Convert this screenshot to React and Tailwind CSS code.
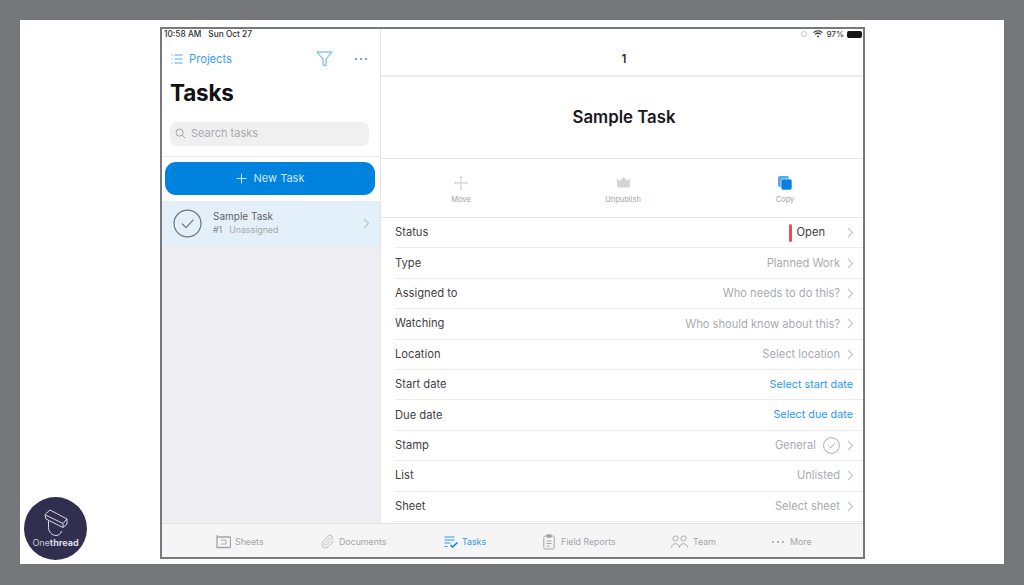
import React from "react";
import { Paperclip } from "lucide-react";

const F = "font-['Inter','Liberation_Sans',sans-serif]";

function Chevron({ className = "" }) {
  return (
    <svg width="7" height="11" viewBox="0 0 7 11" fill="none" className={className}>
      <path d="M1 1l4.500 4.500L1 10" stroke="#c4c5c9" strokeWidth="1.1" />
    </svg>
  );
}

function CheckCircle({ size, stroke = "#77777a", w = 1.2 }) {
  return (
    <svg width={size} height={size} viewBox="0 0 28 28" fill="none">
      <circle cx="14" cy="14" r="13" stroke={stroke} strokeWidth={w} />
      <path d="M9 14.500l3.600 3.500L19.500 10.500" stroke={stroke} strokeWidth={w} strokeLinecap="round" strokeLinejoin="round" />
    </svg>
  );
}

function Row({ label, value, tone = "gray", chevron = true, bar = false, stamp = false }) {
  const color =
    tone === "blue"
      ? "text-[#2b9af3] text-[10.8px]"
      : tone === "dark"
      ? "text-[#3c3c40] text-[11.15px]"
      : "text-[#a9abb0] text-[11.15px]";
  return (
    <div className="h-[30.4px] flex items-center border-b border-[#ececee] text-[11.2px]">
      <span className="text-[#3f3f43]">{label}</span>
      <div className="ml-auto flex items-center">
        {bar && <span className="w-[3px] h-[18px] bg-[#ee4c55] rounded-sm mr-[5px]" />}
        <span className={color}>{value}</span>
        {stamp && (
          <span className="ml-[7px] flex">
            <CheckCircle size={17} stroke="#8a8b8f" />
          </span>
        )}
        {chevron ? (
          <span className={`${bar ? "ml-[22px]" : stamp ? "ml-[7px]" : "ml-[7px]"} mr-[9px] flex`}>
            <Chevron />
          </span>
        ) : (
          <span className="mr-[10px]" />
        )}
      </div>
    </div>
  );
}

function Action({ icon, label }) {
  return (
    <div className="w-[162px] shrink-0 flex flex-col items-center justify-start pt-[16px]">
      <div className="h-[15px] flex items-center">{icon}</div>
      <span className="mt-[3px] text-[7.5px] text-[#a2a3a8] leading-[14px]">{label}</span>
    </div>
  );
}

function Tab({ icon, label, active, width, gap = "gap-[4px]" }) {
  return (
    <div className={`flex items-center ${gap} ${width} shrink-0`}>
      {icon}
      <span className={`text-[8.8px] ${active ? "text-[#2b9af3]" : "text-[#a4a5a9]"}`}>{label}</span>
    </div>
  );
}

export default function App() {
  return (
    <div className={`w-[1024px] h-[585px] bg-[#76777b] px-5 pt-5 ${F}`}>
      <div className="relative w-[984px] h-[544px] bg-white pl-[140px] pt-[7px]">
        <div className="w-[705px] h-[532px] border-2 border-[#77797d] flex flex-col bg-white overflow-hidden">
          <div className="flex flex-1 min-h-0">
            {/* sidebar */}
            <div className="w-[219px] shrink-0 bg-[#efeff3] border-r border-[#e4e4e7] flex flex-col">
              <div className="bg-white h-[127px] flex flex-col">
                <div className="h-[10px] pl-[2px] flex items-center text-[8.3px] text-[#303033] font-medium gap-[7px]">
                  <span>10:58 AM</span>
                  <span>Sun Oct 27</span>
                </div>
                <div className="mt-[8px] h-[24px] flex items-center pl-[9px] pr-[13px]">
                  <svg width="12" height="10" viewBox="0 0 12 10" fill="none" stroke="#3a9df0" strokeWidth="0.9">
                    <path d="M3.500 1h8M3.500 5h8M3.500 9h8" />
                    <path d="M0.500 1h1M0.500 5h1M0.500 9h1" />
                  </svg>
                  <span className="ml-[6px] text-[11.2px] text-[#3a9df0]">Projects</span>
                  <svg className="ml-auto" width="17" height="16" viewBox="0 0 17 16" fill="none" stroke="#3a9df0" strokeWidth="0.9">
                    <path d="M1 1h15l-6 7v7l-3-1.500V8z" strokeLinejoin="round" />
                  </svg>
                  <div className="ml-[22px] flex gap-[3px]">
                    <span className="w-[2px] h-[2px] rounded-full bg-[#2b8fe6]" />
                    <span className="w-[2px] h-[2px] rounded-full bg-[#2b8fe6]" />
                    <span className="w-[2px] h-[2px] rounded-full bg-[#2b8fe6]" />
                  </div>
                </div>
                <div className="mt-[6px] pl-[8px] text-[22.500px] leading-[32px] font-bold text-[#111114] tracking-[-0.2px]">Tasks</div>
                <div className="mt-[13px] ml-[8px] w-[199px] h-[24px] rounded-[7px] bg-[#f0f0f0] flex items-center pl-[5px] pb-[1px] gap-[5px]">
                  <svg width="11" height="11" viewBox="0 0 11 11" fill="none" stroke="#a0a1a5" strokeWidth="1">
                    <circle cx="4.600" cy="4.600" r="3.600" />
                    <path d="M7.300 7.300l3 3" />
                  </svg>
                  <span className="text-[11px] text-[#a9aaae]">Search tasks</span>
                </div>
              </div>
              <div className="h-px bg-[#e9e9eb]" />
              <div className="bg-white h-[44px] pl-[3px] pr-[5px] pt-[5px]">
                <div className="h-[33px] rounded-[11px] bg-[#0083df] flex items-center justify-center gap-[7px] text-[#cfe7fa]">
                  <svg width="11" height="11" viewBox="0 0 11 11" stroke="#cfe7fa" strokeWidth="1">
                    <path d="M5.500 0.500v10M0.500 5.500h10" />
                  </svg>
                  <span className="text-[11px]">New Task</span>
                </div>
              </div>
              <div className="h-[45px] bg-[#e3f0fa] flex items-center pl-[11px] pr-[10px] pb-[1px]">
                <CheckCircle size={29} />
                <div className="ml-[11px] flex flex-col">
                  <span className="text-[10px] leading-[14px] text-[#626266]">Sample Task</span>
                  <span className="text-[8.800px] leading-[14px] text-[#a5a8ad]">
                    <span className="text-[#87898e]">#1</span>
                    <span className="ml-[7px]">Unassigned</span>
                  </span>
                </div>
                <Chevron className="ml-auto" />
              </div>
            </div>
            {/* detail */}
            <div className="flex-1 flex flex-col bg-white min-w-0">
              <div className="h-[10px] flex items-center justify-end pr-[1px] gap-[3px] text-[8.1px] font-medium text-[#3a3a3d]">
                <span className="w-[6px] h-[6px] rounded-full border border-[#c8c8ca] mr-[3px]" />
                <svg width="10" height="8" viewBox="0 0 10 8" fill="none" stroke="#26262a" strokeWidth="1.100">
                  <path d="M0.600 2.600a6.200 6.200 0 0 1 8.800 0M2.200 4.300a3.900 3.900 0 0 1 5.600 0" />
                  <circle cx="5" cy="6.400" r="0.900" fill="#26262a" stroke="none" />
                </svg>
                <span>97%</span>
                <span className="w-[15px] h-[7px] bg-[#161618] rounded-[2px]" />
              </div>
              <div className="h-[38px] flex items-center justify-center border-b-2 border-[#ececee] text-[11.500px] font-semibold text-[#2a2a2e] pt-[5px] pl-[4px]">1</div>
              <div className="h-[82px] flex items-center justify-center border-b border-[#e8e8ea] text-[16.800px] font-semibold text-[#17171c] pl-[4px]">Sample Task</div>
              <div className="h-[59px] border-b border-[#e8e8ea] overflow-hidden">
                <div className="flex -ml-px">
                  <Action
                    label="Move"
                    icon={
                      <svg width="14" height="14" viewBox="0 0 14 14" fill="none" stroke="#c9cacd" strokeWidth="1">
                        <path d="M7 0.500v13M0.500 7h13M5.500 2L7 0.500 8.500 2M5.500 12L7 13.500 8.500 12M2 5.500L0.500 7 2 8.500M12 5.500L13.500 7 12 8.500" />
                      </svg>
                    }
                  />
                  <Action
                    label="Unpublish"
                    icon={
                      <svg width="15" height="11" viewBox="0 0 15 11">
                        <path d="M0.500 1l3 3L7.500 0l4 4 3-3-1 9.500h-12z" fill="#d3d4d8" />
                      </svg>
                    }
                  />
                  <Action
                    label="Copy"
                    icon={
                      <svg width="14" height="14" viewBox="0 0 14 14">
                        <rect x="0" y="0" width="11" height="11" rx="2" fill="#54a9ee" />
                        <rect x="3" y="3" width="11" height="11" rx="2" fill="#0a80e2" stroke="#fff" strokeWidth="0.600" />
                      </svg>
                    }
                  />
                </div>
              </div>
              <div className="flex-1 pl-[14px] min-h-0">
                <Row label="Status" value="Open" tone="dark" bar />
                <Row label="Type" value="Planned Work" />
                <Row label="Assigned to" value="Who needs to do this?" />
                <Row label="Watching" value="Who should know about this?" />
                <Row label="Location" value="Select location" />
                <Row label="Start date" value="Select start date" tone="blue" chevron={false} />
                <Row label="Due date" value="Select due date" tone="blue" chevron={false} />
                <Row label="Stamp" value="General" stamp />
                <Row label="List" value="Unlisted" />
                <Row label="Sheet" value="Select sheet" />
              </div>
            </div>
          </div>
          {/* tab bar */}
          <div className="h-[34px] shrink-0 bg-[#f5f5f6] border-t border-[#e3e3e5] flex items-center pl-[54px] pt-[2px]">
            <Tab
              width="w-[104px]"
              label="Sheets"
              icon={
                <svg width="15" height="15" viewBox="0 0 15 15" fill="none" stroke="#a4a5a9" strokeWidth="1">
                  <path d="M1 1v12.500h12.500a1 1 0 0 0 1-1V4a1 1 0 0 0-1-1H1" strokeWidth="1.300" />
                  <path d="M5 6h5v4H5" strokeWidth="0.900" />
                </svg>
              }
            />
            <Tab
              width="w-[124px]"
              label="Documents"
              icon={<Paperclip size={15} strokeWidth={1.1} color="#a4a5a9" />}
            />
            <Tab
              width="w-[99px]"
              active
              label="Tasks"
              icon={
                <svg width="14" height="12" viewBox="0 0 14 12" fill="none" stroke="#2b9af3" strokeWidth="1">
                  <path d="M0.500 1h10M0.500 4h10M0.500 7h6M0.500 10.500h3" />
                  <path d="M6.500 9l2 2 5-4.500" strokeWidth="1.500" stroke="#0a7ed8" />
                </svg>
              }
            />
            <Tab
              width="w-[128px]"
              label="Field Reports"
              gap="gap-[6px]"
              icon={
                <svg width="12" height="16" viewBox="0 0 12 16" fill="none" stroke="#a4a5a9" strokeWidth="1">
                  <rect x="0.800" y="2" width="10.400" height="13" rx="1.500" />
                  <rect x="3.500" y="0.700" width="5" height="2.600" rx="1" fill="#a4a5a9" />
                  <path d="M3.500 7h5M3.500 9.500h5M3.500 12h3" />
                </svg>
              }
            />
            <Tab
              width="w-[101px]"
              label="Team"
              gap="gap-[5px]"
              icon={
                <svg width="17" height="13" viewBox="0 0 17 13" fill="none" stroke="#a4a5a9" strokeWidth="0.900">
                  <circle cx="4.500" cy="3.500" r="2.600" />
                  <circle cx="12.500" cy="3.500" r="2.600" />
                  <path d="M0.500 12.500c0-5 8-5 8 0M8.500 12.500c0-5 8-5 8 0" />
                </svg>
              }
            />
            <Tab
              width="w-[60px]"
              label="More"
              gap="gap-[6px]"
              icon={
                <div className="flex gap-[3px]">
                  <span className="w-[2px] h-[2px] rounded-full bg-[#9b9ca0]" />
                  <span className="w-[2px] h-[2px] rounded-full bg-[#9b9ca0]" />
                  <span className="w-[2px] h-[2px] rounded-full bg-[#9b9ca0]" />
                </div>
              }
            />
          </div>
        </div>
        {/* watermark logo */}
        <div className="absolute left-[4px] top-[477px] w-[63px] h-[63px] rounded-full bg-[#302f50] flex flex-col items-center">
          <svg className="mt-[12px]" width="24" height="28" viewBox="0 0 24 28" fill="none" stroke="#d9d9e2" strokeWidth="1" strokeLinejoin="round">
            <path d="M1 5.500L6 1l17 9v5l-4 3.500L2 10z" />
            <path d="M1.500 6L19 14.500v4M19 14.500l4-4.500" />
            <path d="M4.500 12v6.500c0 4.500 3.500 8 7.500 8 2.500 0 5-1.500 5.500-4.500" />
          </svg>
          <span className="mt-[1px] text-[9px] leading-[10px] text-[#c4c4d0]">
            One<span className="font-bold text-[#dedee6]">thread</span>
          </span>
        </div>
      </div>
    </div>
  );
}
